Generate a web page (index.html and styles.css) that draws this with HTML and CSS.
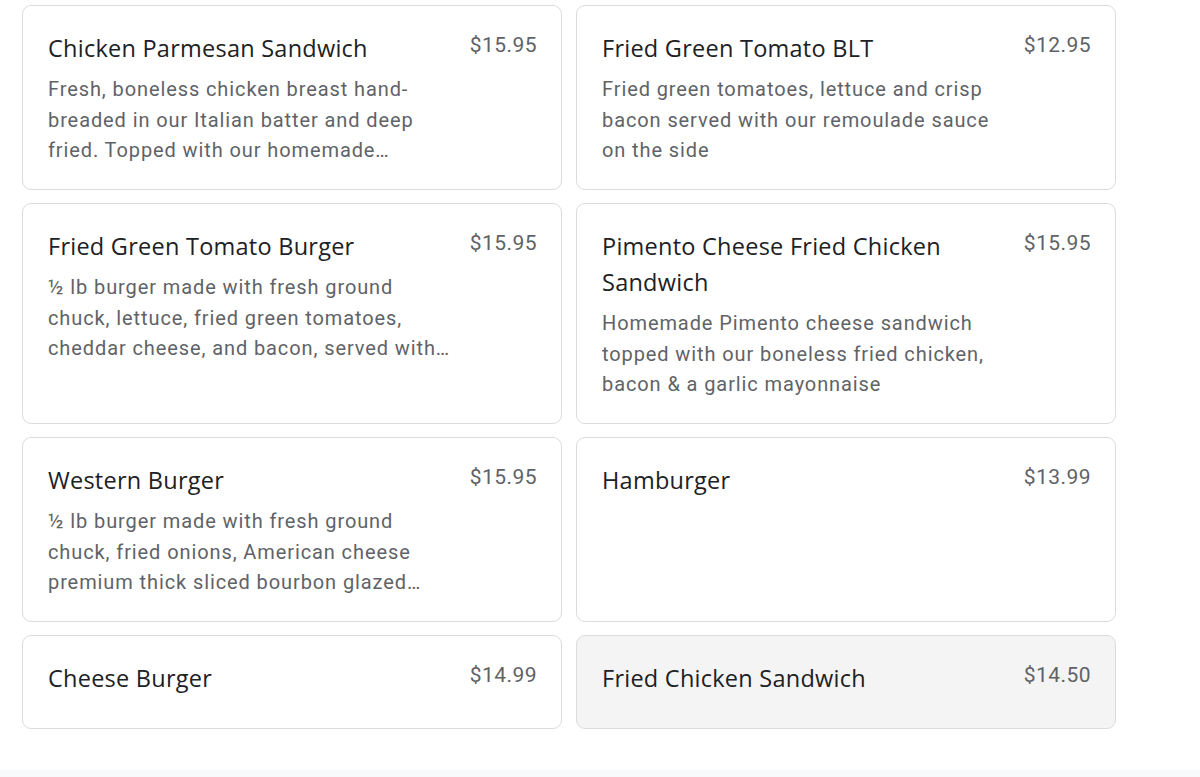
FILE: index.html
```html
<!DOCTYPE html>
<html>
<head>
<meta charset="utf-8">
<link rel="stylesheet" href="styles.css">
</head>
<body>
<div class="page">
  <div class="grid">
    <div class="card">
      <div class="info">
        <div class="title">Chicken Parmesan Sandwich</div>
        <div class="desc">Fresh, boneless chicken breast hand-breaded in our Italian batter and deep fried. Topped with our homemade marinara sauce and melted provolone cheese on a toasted bun</div>
      </div>
      <div class="price">$15.95</div>
    </div>
    <div class="card">
      <div class="info">
        <div class="title">Fried Green Tomato BLT</div>
        <div class="desc">Fried green tomatoes, lettuce and crisp bacon served with our remoulade sauce on the side</div>
      </div>
      <div class="price">$12.95</div>
    </div>
    <div class="card">
      <div class="info">
        <div class="title">Fried Green Tomato Burger</div>
        <div class="desc">½ lb burger made with fresh ground chuck, lettuce, fried green tomatoes, cheddar cheese, and bacon, served with our remoulade sauce</div>
      </div>
      <div class="price">$15.95</div>
    </div>
    <div class="card">
      <div class="info">
        <div class="title">Pimento Cheese Fried Chicken Sandwich</div>
        <div class="desc">Homemade Pimento cheese sandwich topped with our boneless fried chicken, bacon &amp; a garlic mayonnaise</div>
      </div>
      <div class="price">$15.95</div>
    </div>
    <div class="card">
      <div class="info">
        <div class="title">Western Burger</div>
        <div class="desc">½ lb burger made with fresh ground chuck, fried onions, American cheese premium thick sliced bourbon glazed bacon and BBQ sauce</div>
      </div>
      <div class="price">$15.95</div>
    </div>
    <div class="card">
      <div class="info">
        <div class="title">Hamburger</div>
        <div class="desc"></div>
      </div>
      <div class="price">$13.99</div>
    </div>
    <div class="card">
      <div class="info">
        <div class="title">Cheese Burger</div>
        <div class="desc"></div>
      </div>
      <div class="price">$14.99</div>
    </div>
    <div class="card hover">
      <div class="info">
        <div class="title">Fried Chicken Sandwich</div>
        <div class="desc"></div>
      </div>
      <div class="price">$14.50</div>
    </div>
  </div>
  <div class="footer-band"></div>
</div>
</body>
</html>
```
FILE: styles.css
```css
html, body {
  margin: 0;
  padding: 0;
  background: #ffffff;
}
.page {
  width: 1200px;
  height: 777px;
  display: flex;
  flex-direction: column;
  overflow: hidden;
}
.grid {
  display: grid;
  grid-template-columns: 540px 540px;
  column-gap: 14px;
  row-gap: 13px;
  padding: 5px 0 0 22px;
}
.card {
  box-sizing: border-box;
  border: 1px solid #dadce0;
  border-radius: 9px;
  padding: 24px 24px 23.5px 25px;
  display: flex;
  justify-content: space-between;
  gap: 10px;
  background: #ffffff;
}
.card.hover {
  background: #f4f4f4;
}
.info {
  flex: 0 0 411px;
}
.title {
  font-family: "Open Sans", sans-serif;
  font-size: 23.5px;
  line-height: 36px;
  color: #202124;
  letter-spacing: 0.25px;
}
.desc {
  margin-top: 8px;
  font-family: Roboto, sans-serif;
  font-size: 20px;
  line-height: 30.5px;
  color: #5f6368;
  letter-spacing: 0.9px;
  display: -webkit-box;
  -webkit-line-clamp: 3;
  -webkit-box-orient: vertical;
  overflow: hidden;
}
.price {
  font-family: Roboto, sans-serif;
  font-size: 21px;
  line-height: 30px;
  color: #5f6368;
  letter-spacing: 0.45px;
  white-space: nowrap;
  margin-top: 0;
}
.footer-band {
  margin-top: auto;
  height: 7px;
  background: #f8f9fa;
}
```
